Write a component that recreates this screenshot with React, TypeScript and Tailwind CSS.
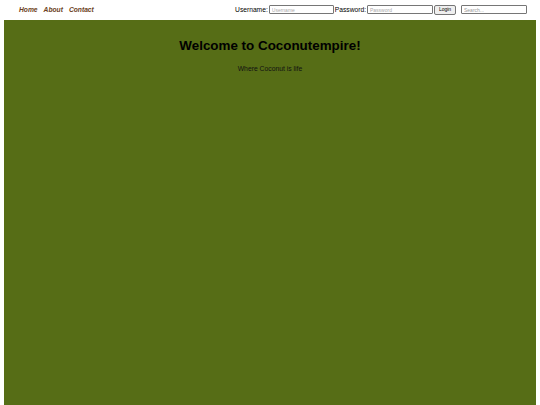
import React from 'react';

const App: React.FC = () => {
  return (
    <div className="min-h-screen bg-white flex flex-col" style={{ fontFamily: '"Liberation Sans", Arial, sans-serif' }}>
      {/* Header */}
      <header className="h-[20px] flex items-center justify-between pl-[19px] pr-[13px]">
        <nav className="flex items-center gap-[6px] text-[6.7px] font-bold italic text-[#6b3e20]">
          <a>Home</a>
          <a>About</a>
          <a>Contact</a>
        </nav>
        <div className="flex items-center text-[6.7px] text-black">
          <span>Username:</span>
          <input placeholder="Username" className="ml-[1px] w-[65px] h-[9px] border border-[#767676] rounded-[1px] px-[2px] text-[5px] placeholder-[#aaa] outline-none" />
          <span className="ml-[1px]">Password:</span>
          <input placeholder="Password" className="ml-[1px] w-[66px] h-[9px] border border-[#767676] rounded-[1px] px-[2px] text-[5px] placeholder-[#aaa] outline-none" />
          <button className="ml-[1px] w-[22px] h-[10px] bg-[#efefef] border border-[#767676] rounded-[2px] text-[5px] leading-none">Login</button>
          <input placeholder="Search..." className="ml-[5px] w-[66px] h-[9px] border border-[#767676] rounded-[1px] px-[2px] text-[5px] placeholder-[#999] outline-none" />
        </div>
      </header>

      {/* Main */}
      <main className="flex-1 mx-[4px] bg-[#566d16] flex flex-col items-center pt-[19px]">
        <h1 className="text-[13.4px] font-bold text-black leading-none">Welcome to Coconutempire!</h1>
        <p className="mt-[12px] text-[6.8px] text-[#111]">Where Coconut is life</p>
      </main>
    </div>
  );
};

export default App;
